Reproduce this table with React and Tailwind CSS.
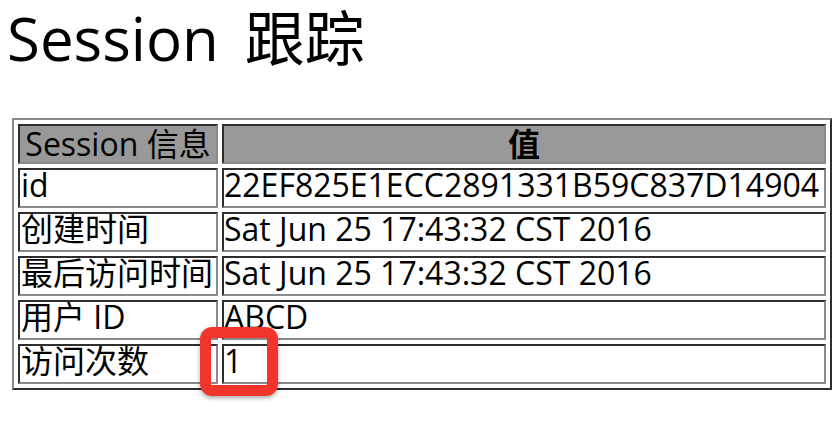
import React from "react";

const rows = [
  ["id", "22EF825E1ECC2891331B59C837D14904"],
  ["创建时间", "Sat Jun 25 17:43:32 CST 2016"],
  ["最后访问时间", "Sat Jun 25 17:43:32 CST 2016"],
  ["用户 ID", "ABCD"],
  ["访问次数", "1"],
];

const cell =
  "h-[40px] border-2 border-t-[#2e2e2e] border-l-[#2e2e2e] border-r-[#8a8a8a] border-b-[#8a8a8a] align-top leading-[26px] pt-[2px] pb-0";

export default function App() {
  return (
    <div className="relative w-[838px] h-[422px] overflow-hidden bg-white text-black font-['Open_Sans','Noto_Sans_CJK_SC',sans-serif]">
      <div className="pl-[12px]">
        <h1 className="h-[80px] pt-[6px] -ml-[5px] text-[60px] leading-[64px] font-normal whitespace-nowrap">
          Session<span className="ml-[26px]">跟踪</span>
        </h1>
        <table className="mt-[38px] w-[820px] table-fixed border-separate border-spacing-[4px] border-2 border-t-[#8a8a8a] border-l-[#8a8a8a] border-r-[#2e2e2e] border-b-[#2e2e2e] text-[32px]">
          <thead>
            <tr>
              <th className={`${cell} w-[200px] bg-[#999999] font-normal text-center pt-[5px] px-0 whitespace-nowrap`}>
                Session 信息
              </th>
              <th className={`${cell} bg-[#999999] font-bold text-center pt-[5px] px-0`}>
                值
              </th>
            </tr>
          </thead>
          <tbody>
            {rows.map(([k, v]) => (
              <tr key={k}>
                <td className={`${cell} pl-[1px] pr-0 whitespace-nowrap`}>{k}</td>
                <td className={`${cell} pl-0 pr-0 whitespace-nowrap`}>{v}</td>
              </tr>
            ))}
          </tbody>
        </table>
      </div>
      <div className="absolute left-[200px] top-[327px] w-[78px] h-[69px] rounded-[12px] border-[11px] border-[#f2352c] shadow-[0_2px_4px_rgba(0,0,0,0.35)]" />
    </div>
  );
}
